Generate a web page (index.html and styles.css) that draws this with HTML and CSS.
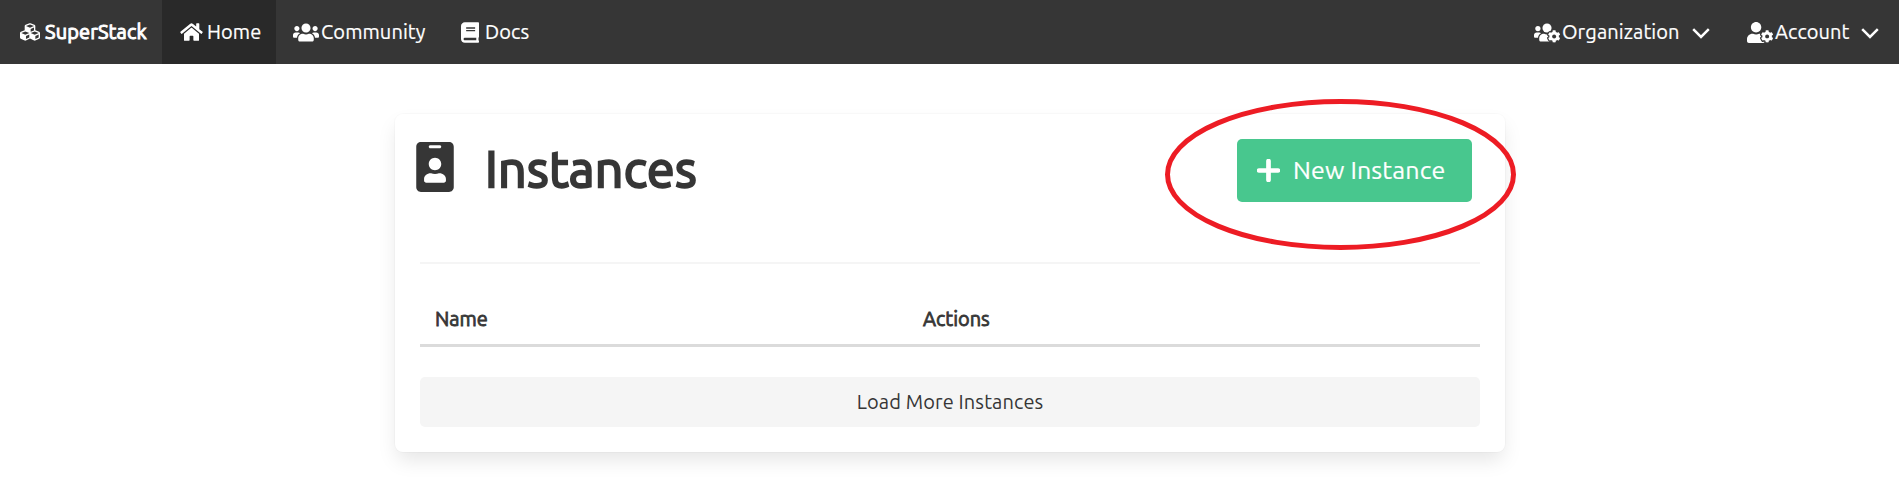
FILE: index.html
```
<!DOCTYPE html>
<html lang="en">
<head>
<meta charset="utf-8">
<title>SuperStack</title>
<link rel="stylesheet" href="styles.css">
</head>
<body>
<nav class="navbar">
  <a class="brand"><svg class="cubes" viewBox="0 0 512 512"><path d="M488.6 250.2L392 214V105.5c0-15-9.3-28.4-23.4-33.7l-100-37.5c-8.1-3.1-17.1-3.1-25.3 0l-100 37.5c-14.1 5.3-23.4 18.7-23.4 33.7V214l-96.6 36.2C9.3 255.5 0 268.9 0 283.9V394c0 13.6 7.7 26.1 19.9 32.2l100 50c10.1 5.1 22.1 5.1 32.2 0l103.9-52 103.9 52c10.1 5.1 22.1 5.1 32.2 0l100-50c12.2-6.1 19.9-18.6 19.9-32.2V283.9c0-15-9.3-28.4-23.4-33.7zM358 214.8l-85 31.9v-68.2l85-37v73.3zM154 104.1l102-38.2 102 38.2v.6l-102 41.4-102-41.4v-.6zm84 291.1l-85 42.5v-79.1l85-38.8v75.4zm0-112l-102 41.4-102-41.4v-.6l102-38.2 102 38.2v.6zm240 112l-85 42.5v-79.1l85-38.8v75.4zm0-112l-102 41.4-102-41.4v-.6l102-38.2 102 38.2v.6z"/></svg><span class="label">SuperStack</span></a>
  <a class="item home"><svg class="house" viewBox="0 0 576 512"><path d="M280.37 148.26L96 300.11V464a16 16 0 0 0 16 16l112.06-.29a16 16 0 0 0 15.92-16V368a16 16 0 0 1 16-16h64a16 16 0 0 1 16 16v95.64a16 16 0 0 0 16 16.05L464 480a16 16 0 0 0 16-16V300L295.67 148.26a12.19 12.19 0 0 0-15.3 0zM571.6 251.47L488 182.56V44.05a12 12 0 0 0-12-12h-56a12 12 0 0 0-12 12v72.61L318.47 43a48 48 0 0 0-61 0L4.34 251.47a12 12 0 0 0-1.6 16.9l25.5 31A12 12 0 0 0 45.15 301l235.22-193.74a12.19 12.19 0 0 1 15.3 0L530.9 301a12 12 0 0 0 16.9-1.6l25.5-31a12 12 0 0 0-1.7-16.93z"/></svg><span class="label">Home</span></a>
  <a class="item community"><svg class="wide" viewBox="0 0 640 512"><path d="M96 224c35.3 0 64-28.7 64-64s-28.7-64-64-64-64 28.7-64 64 28.7 64 64 64zm448 0c35.3 0 64-28.7 64-64s-28.7-64-64-64-64 28.7-64 64 28.7 64 64 64zm32 32h-64c-17.6 0-33.5 7.1-45.1 18.6 40.3 22.1 68.9 62 75.1 109.4h66c17.7 0 32-14.3 32-32v-32c0-35.3-28.7-64-64-64zm-256 0c61.9 0 112-50.1 112-112S381.9 32 320 32 208 82.1 208 144s50.1 112 112 112zm76.8 32h-8.3c-20.8 10-43.9 16-68.5 16s-47.6-6-68.5-16h-8.3C179.6 288 128 339.6 128 403.2V432c0 26.5 21.5 48 48 48h288c26.5 0 48-21.5 48-48v-28.8c0-63.6-51.6-115.2-115.2-115.2zm-223.7-13.4C161.5 263.1 145.6 256 128 256H64c-35.3 0-64 28.7-64 64v32c0 17.7 14.3 32 32 32h65.9c6.3-47.4 34.9-87.3 75.2-109.4z"/></svg><span class="label">Community</span></a>
  <a class="item docs"><svg class="book" viewBox="0 0 448 512"><path d="M448 360V24c0-13.3-10.7-24-24-24H96C43 0 0 43 0 96v320c0 53 43 96 96 96h328c13.3 0 24-10.7 24-24v-16c0-7.5-3.5-14.3-8.9-18.7-4.2-15.4-4.2-59.3 0-74.7 5.4-4.3 8.9-11.1 8.9-18.6zM128 134c0-3.3 2.7-6 6-6h212c3.3 0 6 2.7 6 6v20c0 3.3-2.7 6-6 6H134c-3.3 0-6-2.7-6-6v-20zm0 64c0-3.3 2.7-6 6-6h212c3.3 0 6 2.7 6 6v20c0 3.3-2.7 6-6 6H134c-3.3 0-6-2.7-6-6v-20zm253.4 250H96c-17.7 0-32-14.3-32-32 0-17.6 14.4-32 32-32h285.4c-1.9 17.1-1.9 46.9 0 64z"/></svg><span class="label">Docs</span></a>
  <div class="nav-end">
    <a class="item organization"><svg class="wide" viewBox="0 0 640 512"><circle cx="96" cy="160" r="64"/><path d="M173 274.600C161.500 263 145.600 256 128 256H64c-35.300 0-64 28.700-64 64v32c0 17.700 14.300 32 32 32h66c6-47 35-87 75-109.400z"/><circle cx="320" cy="144" r="112"/><path d="M396.800 288h-8.300c-42 20-95 20-137 0h-8.300C179.600 288 128 339.600 128 403.200V432c0 26.500 21.500 48 48 48h256V288z"/><path class="gear" d="M610.5 373.3c2.6-14.1 2.6-28.5 0-42.6l25.8-14.9c3-1.7 4.3-5.2 3.3-8.5-6.7-21.6-18.2-41.2-33.2-57.4-2.3-2.5-6-3.1-9-1.4l-25.8 14.9c-10.9-9.3-23.4-16.5-36.9-21.3v-29.8c0-3.4-2.4-6.4-5.7-7.1-22.3-5-45-4.8-66.2 0-3.3.7-5.7 3.7-5.7 7.1v29.8c-13.5 4.8-26 12-36.9 21.3l-25.8-14.9c-2.9-1.7-6.7-1.1-9 1.4-15 16.2-26.5 35.8-33.2 57.4-1 3.300.4 6.800 3.300 8.500l25.800 14.900c-2.600 14.100-2.600 28.500 0 42.600l-25.800 14.900c-3 1.700-4.300 5.200-3.300 8.500 6.700 21.600 18.200 41.100 33.200 57.400 2.300 2.500 6 3.100 9 1.400l25.800-14.900c10.900 9.300 23.400 16.500 36.900 21.300v29.800c0 3.400 2.400 6.400 5.700 7.100 22.300 5 45 4.800 66.200 0 3.300-.7 5.700-3.700 5.700-7.100v-29.800c13.500-4.800 26-12 36.900-21.300l25.800 14.900c2.900 1.700 6.700 1.100 9-1.400 15-16.200 26.500-35.800 33.200-57.400 1-3.300-.4-6.800-3.300-8.500l-25.800-14.900z"/><circle class="hole" cx="496" cy="352" r="49"/></svg><span class="label">Organization</span><svg class="chevron" viewBox="0 0 18 11"><path d="M1.200 1.200 9 9l7.800-7.800"/></svg></a>
    <a class="item account"><svg class="wide user" viewBox="0 0 640 512"><path d="M610.5 373.3c2.6-14.1 2.6-28.5 0-42.6l25.8-14.9c3-1.7 4.3-5.2 3.3-8.5-6.7-21.6-18.2-41.2-33.2-57.4-2.3-2.5-6-3.1-9-1.4l-25.8 14.9c-10.9-9.3-23.4-16.5-36.9-21.3v-29.8c0-3.4-2.4-6.4-5.7-7.1-22.3-5-45-4.8-66.2 0-3.3.7-5.7 3.7-5.7 7.1v29.8c-13.5 4.8-26 12-36.9 21.3l-25.8-14.9c-2.9-1.7-6.7-1.1-9 1.4-15 16.2-26.5 35.8-33.2 57.4-1 3.3.4 6.8 3.3 8.5l25.8 14.9c-2.6 14.1-2.6 28.5 0 42.6l-25.8 14.9c-3 1.7-4.3 5.2-3.3 8.5 6.7 21.6 18.2 41.1 33.2 57.4 2.3 2.5 6 3.1 9 1.4l25.8-14.9c10.9 9.3 23.4 16.5 36.9 21.3v29.8c0 3.4 2.4 6.4 5.7 7.1 22.3 5 45 4.8 66.2 0 3.3-.7 5.7-3.7 5.7-7.1v-29.8c13.5-4.8 26-12 36.9-21.3l25.8 14.9c2.9 1.7 6.7 1.1 9-1.4 15-16.2 26.5-35.8 33.2-57.4 1-3.3-.4-6.8-3.3-8.5l-25.8-14.9zM496 400.5c-26.8 0-48.5-21.8-48.5-48.5s21.8-48.5 48.5-48.5 48.5 21.8 48.5 48.5-21.7 48.5-48.5 48.5zM224 256c70.7 0 128-57.3 128-128S294.700 0 224 0 96 57.300 96 128s57.300 128 128 128zm201.200 226.500c-2.300-1.200-4.600-2.600-6.800-3.900l-7.900 4.600c-6 3.400-12.800 5.300-19.600 5.300-10.900 0-21.400-4.600-28.900-12.600-18.300-19.800-32.300-43.900-40.200-69.600-5.500-17.700 1.900-36.400 17.900-45.700l7.900-4.600c-.1-2.600-.1-5.200 0-7.800l-7.900-4.600c-16-9.200-23.400-28-17.900-45.700.9-2.900 2.200-5.800 3.200-8.700-3.800-.3-7.500-1.200-11.400-1.200h-16.700c-22.200 10.200-46.900 16-72.900 16s-50.600-5.800-72.900-16h-16.700C60.200 288 0 348.200 0 422.400V464c0 26.500 21.500 48 48 48h352c10.100 0 19.500-3.200 27.200-8.500-1.200-3.800-2-7.700-2-11.800v-9.200z"/></svg><span class="label">Account</span><svg class="chevron" viewBox="0 0 18 11"><path d="M1.200 1.200 9 9l7.800-7.800"/></svg></a>
  </div>
</nav>
<main class="card">
  <header class="card-head">
    <svg class="badge" viewBox="0 0 384 512"><path d="M336 0H48C21.500 0 0 21.500 0 48v416c0 26.500 21.500 48 48 48h288c26.500 0 48-21.500 48-48V48c0-26.500-21.500-48-48-48zM144 32h96c8.800 0 16 7.200 16 16s-7.200 16-16 16h-96c-8.800 0-16-7.200-16-16s7.200-16 16-16zm48 128c35.300 0 64 28.700 64 64s-28.700 64-64 64-64-28.700-64-64 28.700-64 64-64zm112 236.800c0 10.600-10 19.200-22.400 19.200H102.400C90 416 80 407.400 80 396.800v-19.200c0-31.800 30.100-57.600 67.200-57.600h5c12.300 5.100 25.700 8 39.800 8s27.600-2.900 39.800-8h5c37.100 0 67.200 25.800 67.200 57.600v19.200z"/></svg>
    <h1 class="title">Instances</h1>
    <button class="new-button"><svg class="plus" viewBox="0 0 22 22"><path d="M11 2v18M2 11h18"/></svg><span class="new-label">New Instance</span></button>
  </header>
  <hr class="divider">
  <div class="table-head"><span class="th name">Name</span><span class="th actions">Actions</span></div>
  <button class="load-button"><span class="load-label">Load More Instances</span></button>
</main>
<svg class="highlight" viewBox="0 0 352 152"><ellipse cx="175.500" cy="75.500" rx="173" ry="73"/></svg>
</body>
</html>
```
FILE: styles.css
```
* { box-sizing: border-box; }
body {
  margin: 0;
  background: #fff;
  color: #363636;
  font-family: Ubuntu, "Noto Sans", sans-serif;
  font-size: 20px;
  height: 501px;
  overflow: hidden;
}
svg { display: block; flex: none; fill: currentColor; }
button { border: 0; font: inherit; padding: 0; }
.navbar { display: flex; height: 64px; background: #363636; color: #fff; }
.brand, .item { display: flex; align-items: center; height: 64px; }
.label { white-space: nowrap; line-height: 30px; font-size: 20px; margin-top: -1px; letter-spacing: 0.100px; -webkit-text-stroke: 0.200px currentColor; }
.brand { width: 162px; padding-left: 20px; }
.brand .label { margin-left: 5px; letter-spacing: 0.150px; -webkit-text-stroke: 1px currentColor; }
.cubes { width: 20px; height: 20px; }
.home { width: 114px; padding-left: 18px; background: #292929; }
.house { width: 23px; height: 20px; }
.home .label { margin-left: 4px; }
.community { width: 168px; padding-left: 17px; }
.wide { width: 26px; height: 21px; }
.community .label { margin-left: 2px; }
.docs { padding-left: 17px; }
.book { width: 18px; height: 21px; }
.docs .label { margin-left: 6px; }
.nav-end { display: flex; margin-left: auto; width: 365px; }
.organization { width: 213px; }
.organization .label { margin-left: 2px; width: 130px; }
.account .label { margin-left: 2px; width: 86px; }
.gear { stroke: #363636; stroke-width: 60; paint-order: stroke; }
.hole { fill: #363636; }
.chevron { width: 18px; height: 11px; margin-top: 3px; fill: none; stroke: currentColor; stroke-width: 2.500; }
.card {
  width: 1110px;
  height: 338px;
  margin: 50px 0 0 395px;
  padding: 25px;
  border-radius: 8px;
  background: #fff;
  box-shadow: 0 10px 20px -2px rgba(10,10,10,.1), 0 0 0 1px rgba(10,10,10,.02);
}
.card-head { display: flex; height: 123px; margin-left: -4px; align-items: flex-start; }
.badge { width: 38px; height: 50px; margin-top: 3px; }
.title { margin: -1px 0 0 31px; font-size: 50px; line-height: 60px; font-weight: 400; letter-spacing: 0.300px; -webkit-text-stroke: 2.300px currentColor; }
.new-button {
  display: flex;
  align-items: center;
  width: 235px;
  height: 63px;
  margin: 0 8px 0 auto;
  padding-left: 20px;
  border-radius: 5px;
  background: #48c78e;
  color: #fff;
}
.plus { width: 23px; height: 23px; fill: none; stroke: currentColor; stroke-width: 4.500; stroke-linecap: round; }
.new-label { margin: -2px 0 0 13px; font-size: 25px; line-height: 36px; letter-spacing: 0.150px; white-space: nowrap; -webkit-text-stroke: 0.200px currentColor; }
.divider { height: 2px; margin: 0; border: 0; background: #f5f5f5; }
.table-head { display: flex; height: 83px; padding: 41px 15px 0; border-bottom: 3px solid #dbdbdb; }
.th { font-size: 20px; line-height: 28px; -webkit-text-stroke: 0.800px currentColor; }
.name { width: 488px; }
.load-button { display: block; width: 100%; height: 50px; margin-top: 30px; padding-bottom: 2px; border-radius: 5px; background: #f5f5f5; color: #363636; }
.load-label { font-size: 20px; letter-spacing: 0.120px; }
.highlight { position: absolute; left: 1165px; top: 99px; width: 352px; height: 152px; fill: none; stroke: #ed1c24; stroke-width: 5; }
```
